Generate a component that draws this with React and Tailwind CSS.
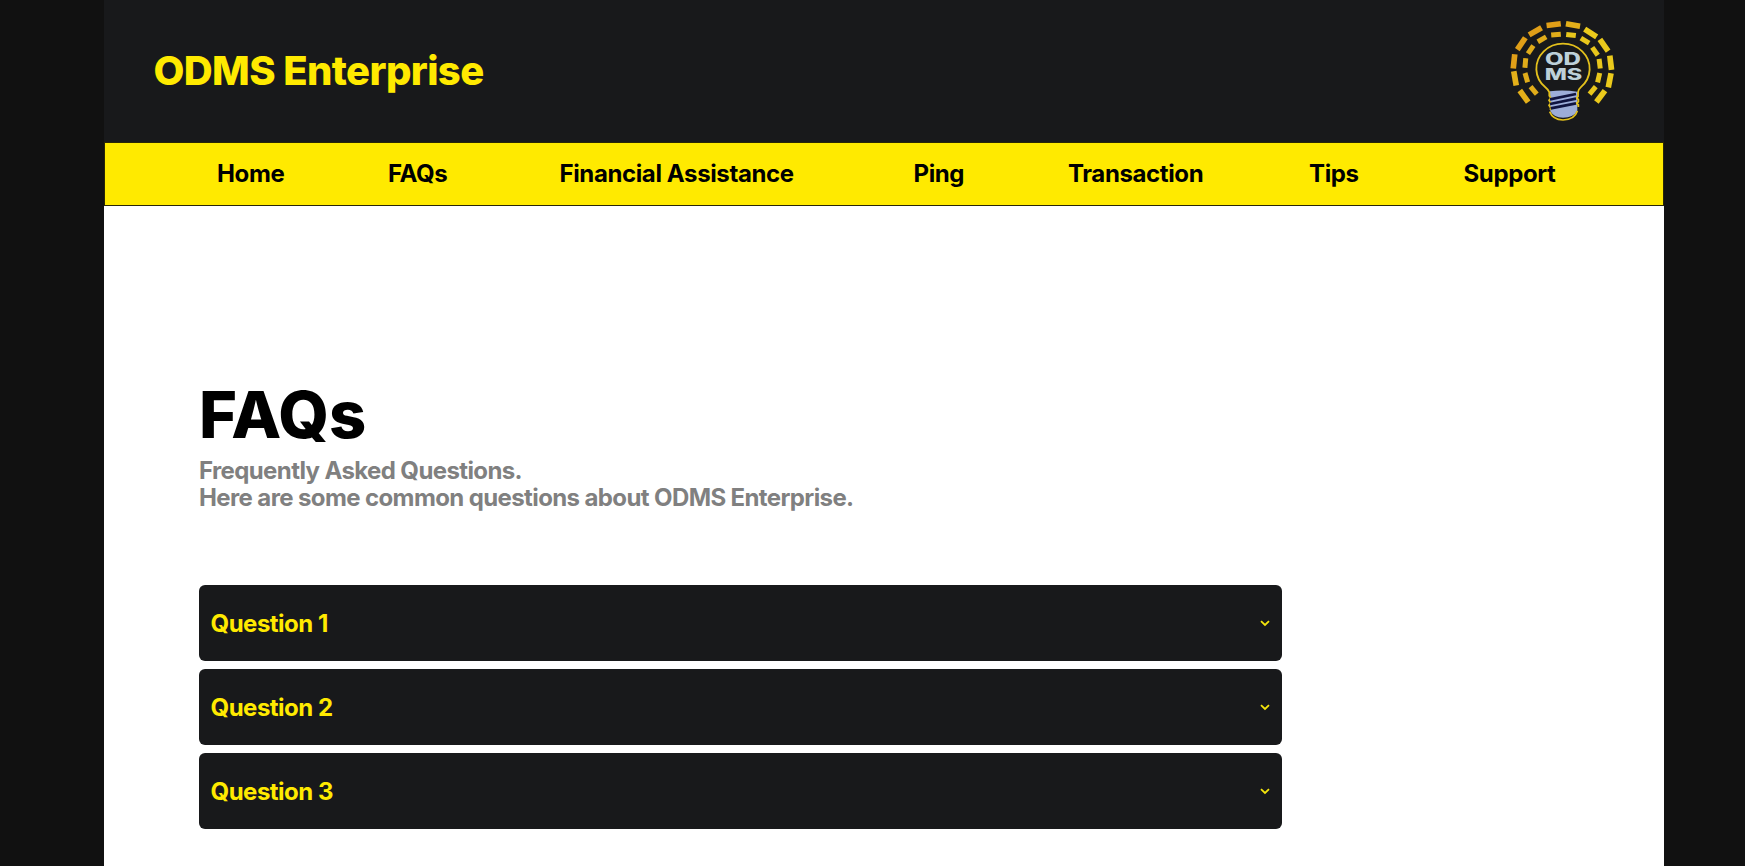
const navItems = [
  { label: "Home", width: "w-[171px]" },
  { label: "FAQs", width: "w-[171.5px]" },
  { label: "Financial Assistance", width: "w-[354px]" },
  { label: "Ping", width: "w-[154.5px]" },
  { label: "Transaction", width: "w-[241px]" },
  { label: "Tips", width: "w-[154.5px]" },
  { label: "Support", width: "w-[110px]" },
];

const questions = ["Question 1", "Question 2", "Question 3"];

const outerRays = [
  [102, 286, 54], [75, 232, 80], [72, 181, 96], [94, 128, 124], [136, 91, 150], [191, 71, 173],
  [249, 72, 10], [302, 96, 33], [342, 133, 55], [362, 185, 83], [359, 238, 101], [332, 286, 127],
];
const innerRays = [
  [131, 268, 50], [109, 230, 74], [106, 186, 95], [122, 146, 124], [156, 115, 150], [198, 101, 175],
  [243, 102, 7], [285, 119, 31], [315, 151, 55], [329, 188, 83], [326, 230, 103], [308, 268, 130],
];

function Ray({ x, y, angle, length, thickness }) {
  return (
    <rect
      x={-length / 2}
      y={-thickness / 2}
      width={length}
      height={thickness}
      transform={`translate(${x} ${y}) rotate(${angle})`}
    />
  );
}

function Logo() {
  return (
    <svg viewBox="54 54 324 312" className="h-[104px] w-[108px]" role="img" aria-label="ODMS">
      {outerRays.map(([x, y, angle], i) => (
        <g key={i} fill={i > 1 && i < 6 ? "#e09f18" : i > 6 ? "#ebca1c" : "#e4b01a"}>
          <Ray x={x} y={y} angle={angle} length={43} thickness={17} />
        </g>
      ))}
      {innerRays.map(([x, y, angle], i) => (
        <g key={i} fill={i < 6 ? "#e0ac1a" : "#e8c61c"}>
          <Ray x={x} y={y} angle={angle} length={29} thickness={15} />
        </g>
      ))}
      <path d="M180 271 Q219 266 262 272 V330 Q250 350 219 350 Q191 350 181 330 Z" fill="#9dadd8" />
      <path
        d="M178 286 V274 Q176 267 166 259 A80 75 0 1 1 272 259 Q264 266 264 274 V286 L260 291 L265 296 V302 L260 307 L265 312 V318"
        fill="none"
        stroke="#e3c01c"
        strokeWidth="5.5"
      />
      <path d="M178 284 L182 291 L177 298 L182 306 L177 313 L182 321 L181 327" fill="none" stroke="#e3c01c" strokeWidth="5" />
      <path d="M179 332 Q188 356 219 357 Q254 356 262 330" fill="none" stroke="#e3c01c" strokeWidth="5" />
      <path d="M180 295 L258 279 M180 309 L258 293 M182 322 L258 307" fill="none" stroke="#10133f" strokeWidth="8" />
      <g fill="#bdd0d9" fontFamily="Inter, sans-serif" fontWeight="800">
        <text x="165" y="193" fontSize="50" textLength="108" lengthAdjust="spacingAndGlyphs">OD</text>
        <text x="164" y="237" fontSize="46" textLength="113" lengthAdjust="spacingAndGlyphs">MS</text>
      </g>
    </svg>
  );
}

function Chevron() {
  return (
    <svg viewBox="0 0 10 7" className="h-[7px] w-[10px]" fill="none" stroke="#f5e60c" strokeWidth="1.8">
      <path d="M1 1.2 L5 5 L9 1.2" />
    </svg>
  );
}

export default function App() {
  return (
    <div className="h-[866px] overflow-hidden bg-[#111111] font-['Inter',sans-serif]">
      <div className="mx-[104px] h-full w-[1560px] bg-white">
        <header className="flex h-[142px] items-center justify-between bg-[#18191b] pr-[48px] pl-[49.5px]">
          <h1 className="text-[40px] font-extrabold tracking-[-0.6px] text-[#ffea00]">ODMS Enterprise</h1>
          <Logo />
        </header>
        <nav className="flex h-16 items-center border border-[#2a2705] bg-[#ffea00] pl-[112px] text-2xl font-bold tracking-[-0.38px] text-black">
          {navItems.map((item) => (
            <a key={item.label} className={`${item.width} shrink-0 whitespace-nowrap`}>
              {item.label}
            </a>
          ))}
        </nav>
        <main className="pt-[169px] pl-[95px]">
          <h2 className="text-[65px] leading-[80px] font-extrabold text-black">FAQs</h2>
          <p className="mt-[2px] text-2xl leading-[27px] font-bold tracking-[-0.61px] text-[#808080]">
            Frequently Asked Questions.
            <br />
            Here are some common questions about ODMS Enterprise.
          </p>
          <div className="mt-[74px] flex w-[1083px] flex-col gap-2">
            {questions.map((question) => (
              <button
                key={question}
                className="flex h-[76px] items-center justify-between rounded-md bg-[#18191b] pt-px pr-3 pl-[11.5px] text-2xl font-bold tracking-[-0.5px] text-[#ffea00]"
              >
                {question}
                <Chevron />
              </button>
            ))}
          </div>
        </main>
      </div>
    </div>
  );
}
